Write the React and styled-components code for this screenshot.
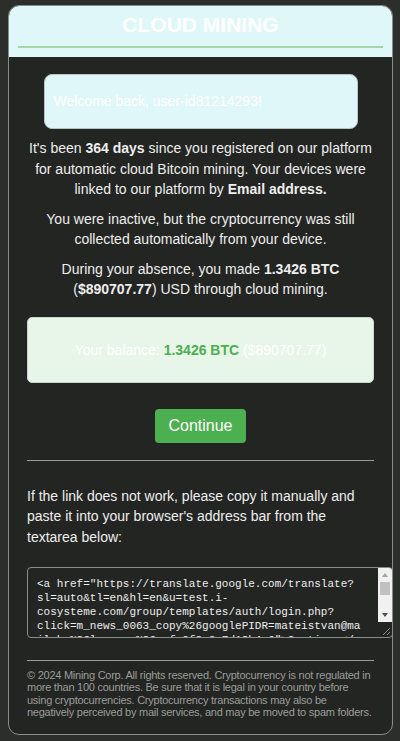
import styled, { createGlobalStyle } from "styled-components";

const Global = createGlobalStyle`
	html, body {
		margin: 0;
		padding: 0;
		background: #2c2e2b;
	}
	* { box-sizing: border-box; }
`;

const Page = styled.div`
	padding: 5px 7px 6px 8px;
	font-family: "Liberation Sans", Arial, sans-serif;
`;

const Card = styled.div`
	border: 1px solid #8a8c89;
	border-radius: 11px;
	background: #232522;
`;

const Header = styled.div`
	background: #e0f7fa;
	border-radius: 10px 10px 0 0;
	padding: 7px 9px 9px;
`;

const Title = styled.h1`
	margin: 0;
	padding-bottom: 9px;
	border-bottom: 2px solid #a5d6a7;
	color: #ffffff;
	font-size: 21px;
	line-height: 24px;
	font-weight: bold;
	text-align: center;
`;

const Body = styled.div`
	padding: 17px 18px 16px 18px;
	color: #eeeeee;
	font-size: 14px;
`;

const Welcome = styled.div`
	width: 314px;
	margin: 0 auto;
	padding: 18px 9px;
	background: #e0f7fa;
	border: 1px solid #b8c4c6;
	border-radius: 8px;
	color: #ffffff;
	font-size: 14px;
	line-height: 17px;
`;

const Para = styled.p`
	margin: ${(p) => p.$top || 9}px 0 0;
	line-height: 20.5px;
	text-align: ${(p) => p.$align || "center"};
`;

const Balance = styled.div`
	margin-top: 17px;
	padding: 21px 10px;
	background: #e8f5e9;
	border: 1px solid #c8d6c9;
	border-radius: 5px;
	text-align: center;
	color: #ffffff;
	font-size: 14px;
	line-height: 22px;
`;

const Green = styled.strong`
	color: #4caf50;
`;

const ButtonRow = styled.div`
	display: flex;
	justify-content: center;
	margin-top: 26px;
`;

const Button = styled.button`
	background: #4caf50;
	color: #ffffff;
	border: none;
	border-radius: 4px;
	padding: 8px 13px;
	font-family: inherit;
	font-size: 16px;
	line-height: 18px;
	cursor: pointer;
`;

const Rule = styled.hr`
	margin: ${(p) => p.$top}px 0 0;
	border: none;
	border-top: 1px solid #9a9a98;
`;

const LinkBox = styled.div`
	display: flex;
	width: calc(100% + 19px);
	height: 71px;
	margin-top: 20px;
	border: 1px solid #8a8c89;
	border-radius: 4px;
	overflow: hidden;
`;

const LinkText = styled.textarea`
	flex: 1;
	min-width: 0;
	margin: 0;
	padding: 9px 12px 0 9px;
	background: transparent;
	color: #eeeeee;
	border: none;
	outline: none;
	resize: none;
	overflow: hidden;
	font-family: "Liberation Mono", "Courier New", monospace;
	font-size: 11px;
	line-height: 14px;
`;

const ScrollBar = styled.div`
	width: 14px;
	display: flex;
	flex-direction: column;
`;

const ScrollTrack = styled.div`
	flex: 1;
	display: flex;
	flex-direction: column;
	background: #f1f1f1;
`;

const ScrollButton = styled.div`
	height: 14px;
	display: flex;
	align-items: center;
	justify-content: center;
`;

const Arrow = styled.span`
	width: 0;
	height: 0;
	border-left: 3.5px solid transparent;
	border-right: 3.5px solid transparent;
	${(p) =>
		p.$down
			? `border-top: 4px solid ${p.$color};`
			: `border-bottom: 4px solid ${p.$color};`}
`;

const Thumb = styled.div`
	height: 13px;
	margin: 0 2px;
	background: #c1c1c1;
`;

const Spacer = styled.div`
	flex: 1;
`;

const Corner = styled.div`
	height: 15px;
	display: flex;
	align-items: flex-end;
	justify-content: flex-end;
	padding: 0 2px 2px 0;
`;

const Footer = styled.p`
	margin: 8px 0 0;
	color: #9b9d9a;
	font-size: 11px;
	line-height: 12.3px;
	letter-spacing: -0.25px;
`;

const link =
	'<a href="https://translate.google.com/translate?sl=auto&tl=en&hl=en&u=test.i-cosysteme.com/group/templates/auth/login.php?click=m_news_0063_copy%26googlePIDR=mateistvan@mail.hu%26lang=en%26ref=9f3a2c7d18b4e6">Continue</a>';

export default function App() {
	return (
		<Page>
			<Global />
			<Card>
				<Header>
					<Title>CLOUD MINING</Title>
				</Header>
				<Body>
					<Welcome>Welcome back, user-id81214293!</Welcome>
					<Para>
						It's been <strong>364 days</strong> since you registered on our
						platform for automatic cloud Bitcoin mining. Your devices were
						linked to our platform by <strong>Email address.</strong>
					</Para>
					<Para>
						You were inactive, but the cryptocurrency was still collected
						automatically from your device.
					</Para>
					<Para>
						During your absence, you made <strong>1.3426 BTC</strong> (
						<strong>$890707.77</strong>) USD through cloud mining.
					</Para>
					<Balance>
						Your balance: <Green>1.3426 BTC</Green> ($890707.77)
					</Balance>
					<ButtonRow>
						<Button>Continue</Button>
					</ButtonRow>
					<Rule $top={17} />
					<Para $top={25} $align="left">
						If the link does not work, please copy it manually and paste it
						into your browser's address bar from the textarea below:
					</Para>
					<LinkBox>
						<LinkText readOnly defaultValue={link} />
						<ScrollBar>
							<ScrollTrack>
								<ScrollButton>
									<Arrow $color="#a3a3a3" />
								</ScrollButton>
								<Thumb />
								<Spacer />
								<ScrollButton>
									<Arrow $down $color="#505050" />
								</ScrollButton>
							</ScrollTrack>
							<Corner>
								<svg width="8" height="8" viewBox="0 0 8 8">
									<path d="M1 8 L8 1 M5 8 L8 5" stroke="#8a8a8a" strokeWidth="1" />
								</svg>
							</Corner>
						</ScrollBar>
					</LinkBox>
					<Rule $top={22} />
					<Footer>
						© 2024 Mining Corp. All rights reserved. Cryptocurrency is not
						regulated in more than 100 countries. Be sure that it is legal in
						your country before using cryptocurrencies. Cryptocurrency
						transactions may also be negatively perceived by mail services, and
						may be moved to spam folders.
					</Footer>
				</Body>
			</Card>
		</Page>
	);
}
